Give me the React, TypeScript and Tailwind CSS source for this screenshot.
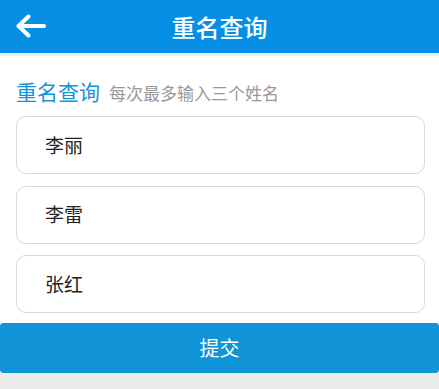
import React from 'react';

const FONT = { fontFamily: '"Noto Sans CJK SC", "Noto Sans", sans-serif' };

const names = ['李丽', '李雷', '张红'];

export default function App() {
  return (
    <div className="flex h-[389px] w-[439px] flex-col bg-[#ebebeb]" style={FONT}>
      <header className="relative flex h-[53px] items-center justify-center bg-[#0590e5]">
        <button type="button" className="absolute left-[15px] top-[13px] flex h-[26px] w-[32px] items-center">
          <svg width="31" height="24" viewBox="0 0 31 24" fill="none">
            <path d="M29 12H4M13.5 2.5L3.5 12l10 9.5" stroke="white" strokeWidth="4" strokeLinecap="round" strokeLinejoin="round" />
          </svg>
        </button>
        <h1 className="text-[24px] font-medium leading-none text-white">重名查询</h1>
      </header>
      <div className="h-[3px] bg-[#eeeeee]" />
      <main className="flex flex-col bg-white pb-[10px] pl-4 pr-[14px] pt-[22px]">
        <div className="flex h-[26px] items-end gap-[9px]">
          <span className="text-[21px] leading-[26px] text-[#1692d6]">重名查询</span>
          <span className="text-[17px] leading-[23px] text-[#999999]">每次最多输入三个姓名</span>
        </div>
        <div className="mt-[12px] flex flex-col gap-[11.5px]">
          {names.map((n) => (
            <div
              key={n}
              className="flex h-[58px] items-center rounded-[10px] border border-[#d9d9d9] bg-white pl-[28px] text-[19px] text-[#222222]"
            >
              {n}
            </div>
          ))}
        </div>
      </main>
      <button
        type="button"
        className="h-[50px] w-full rounded-[4px] bg-[#1094d7] text-[20px] text-white"
      >
        提交
      </button>
    </div>
  );
}
